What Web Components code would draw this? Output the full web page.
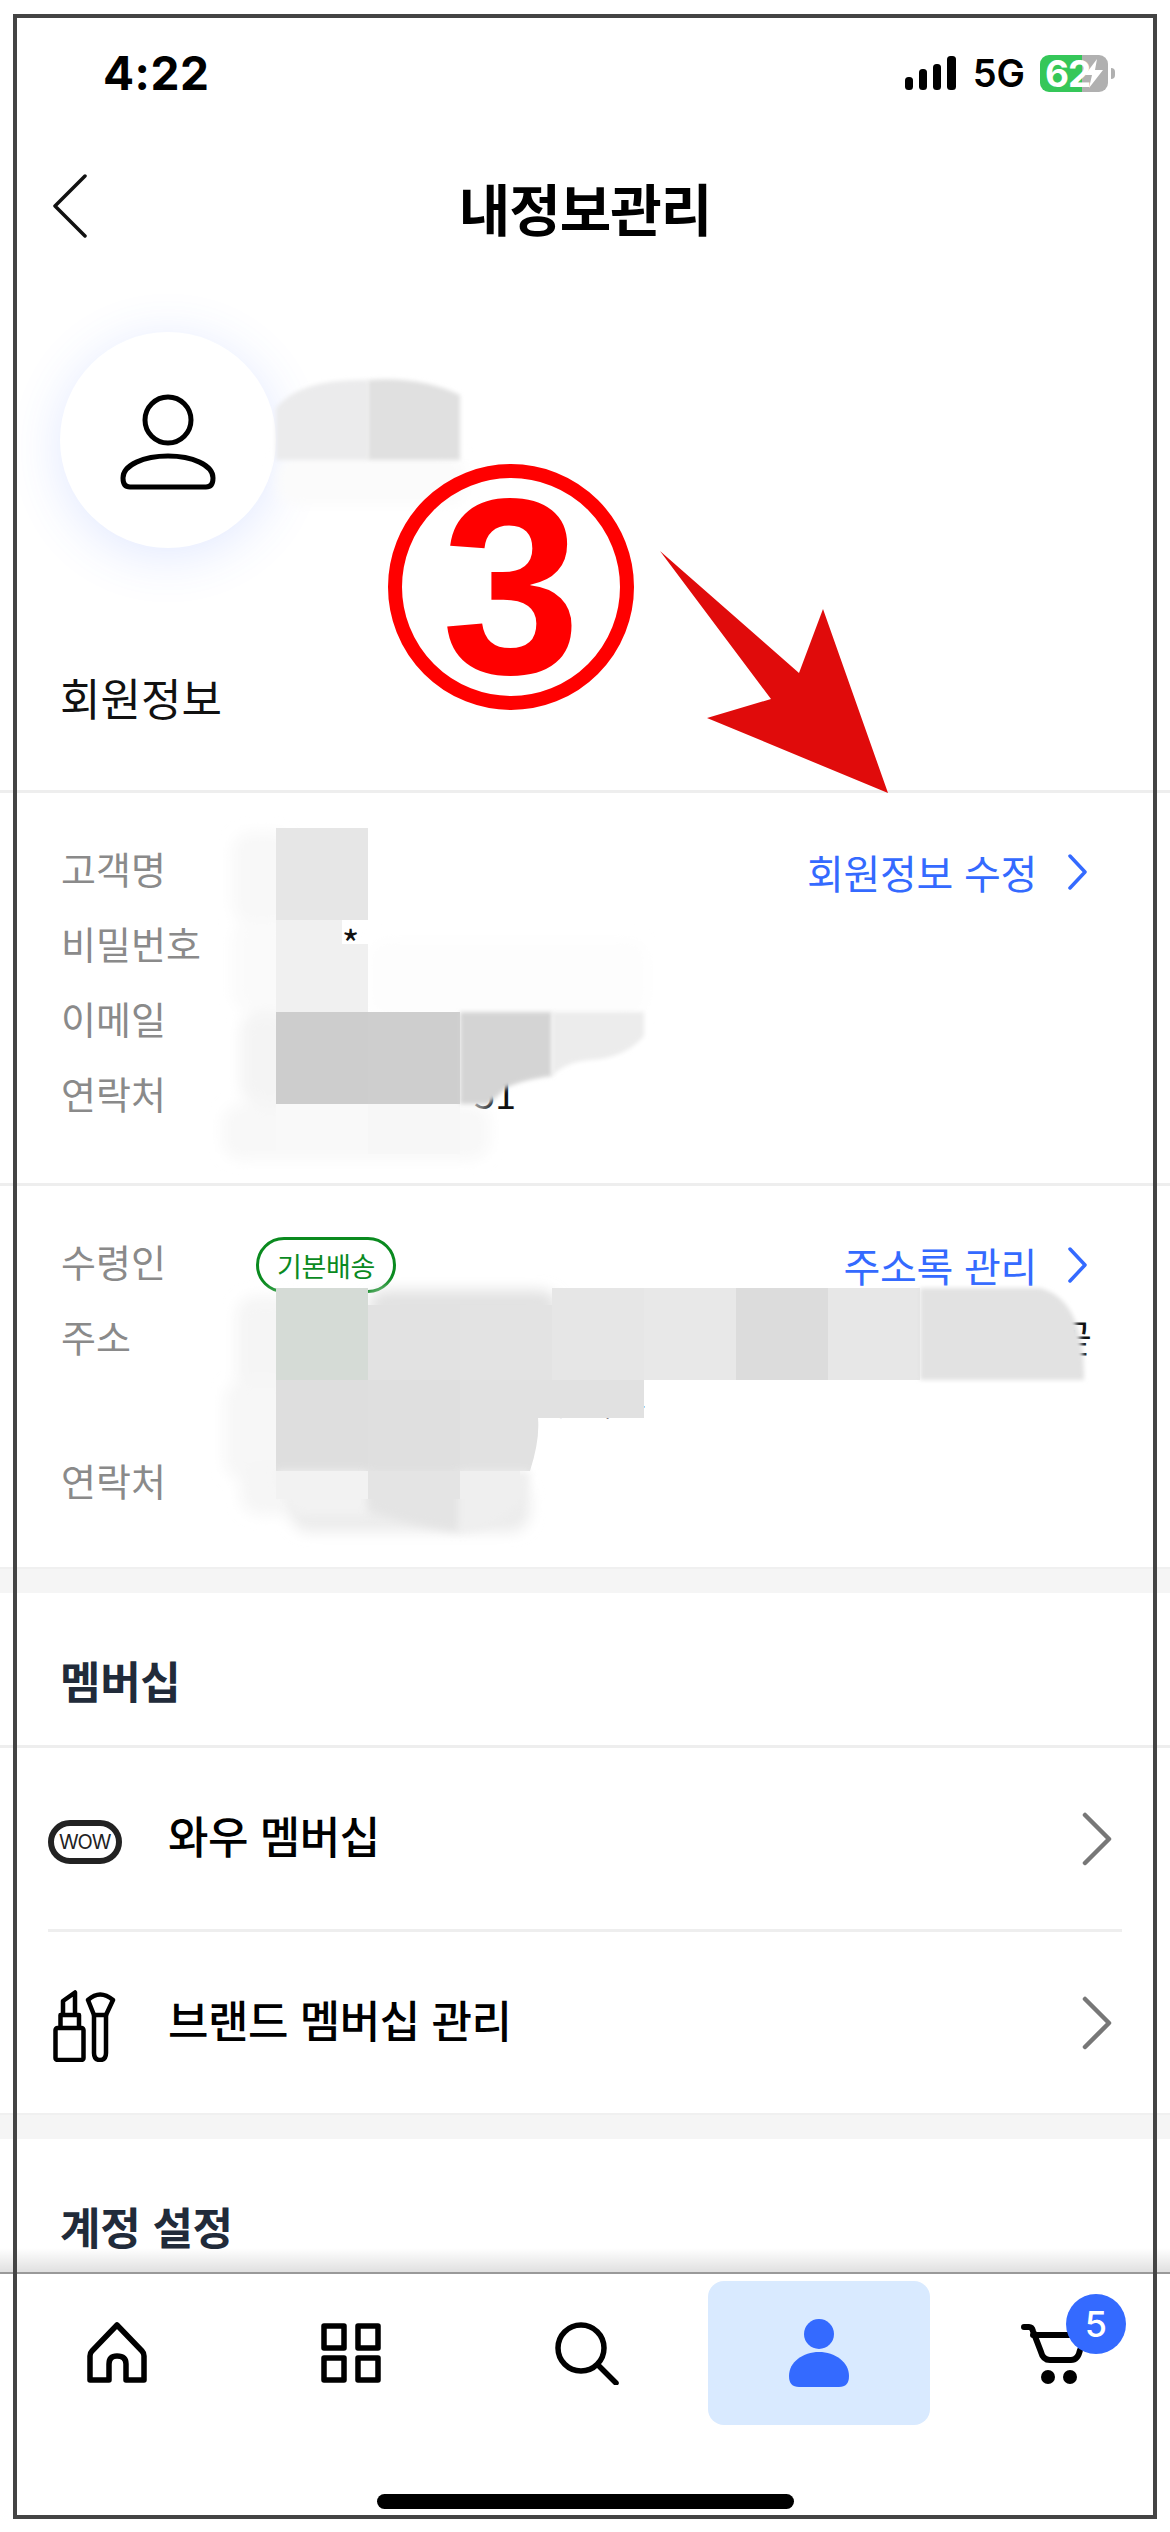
<!DOCTYPE html>
<html lang="ko">
<head>
<meta charset="utf-8">
<title>내정보관리</title>
<style>
  html, body { margin: 0; padding: 0; background: #fff; }
  body { font-family: "Noto Sans CJK KR", "Noto Sans", sans-serif; }
</style>
</head>
<body>
<app-page>
  <status-bar></status-bar>
  <nav-header>내정보관리</nav-header>
  <profile-head>회원정보</profile-head>

  <info-section>
    <info-row label="고객명"></info-row>
    <info-row label="비밀번호"><span style="padding-left:68px">**</span></info-row>
    <info-row label="이메일"></info-row>
    <info-row label="연락처"><span style="padding-left:218px">51</span></info-row>
    <link-action slot="action">회원정보 수정</link-action>
  </info-section>

  <info-section class="address">
    <info-row label="수령인"><default-pill>기본배송</default-pill></info-row>
    <info-row label="주소" tall>
      <div style="text-align:right;width:836px">곧</div>
      <div style="line-height:51px;padding-left:261px;white-space:pre;letter-spacing:-9px;word-spacing:15px;font-weight:300">ㅣㅣ ㅐㅗ</div>
    </info-row>
    <info-row label="연락처"></info-row>
    <link-action slot="action">주소록 관리</link-action>
  </info-section>

  <gap-band></gap-band>
  <section-title>멤버십</section-title>
  <menu-row>
    <svg slot="icon" width="74" height="44" viewBox="0 0 74 44">
      <rect x="3" y="3" width="68" height="38" rx="19" fill="none" stroke="#222" stroke-width="6"/>
      <text x="37" y="29" text-anchor="middle" font-family="Inter, sans-serif" font-size="20" font-weight="400" fill="#222" textLength="52">WOW</text>
    </svg>
    와우 멤버십
  </menu-row>
  <hr-inset></hr-inset>
  <menu-row>
    <svg slot="icon" style="margin-left:5px" width="64" height="72" viewBox="0 0 64 72" fill="none" stroke="#000" stroke-width="4.500" stroke-linejoin="round">
      <rect x="2.500" y="38" width="28" height="32" rx="2"/>
      <path d="M7.500 38V25H26V38"/>
      <path d="M10 25V11L22 2.500V25"/>
      <path d="M41 25H53V63Q53 70 47 70Q41 70 41 63Z"/>
      <path d="M41 25L35 10Q47 -1 60 10L53 25"/>
    </svg>
    브랜드 멤버십 관리
  </menu-row>
  <gap-band></gap-band>
  <section-title>계정 설정</section-title>

  <tab-bar slot="footer">
    <tab-item>
      <svg width="60" height="62" viewBox="0 0 60 62" fill="none" stroke="#000" stroke-width="5.500" stroke-linejoin="round">
        <path d="M30 3L55 29Q57 31 57 34V58H39V42Q39 34 30 34Q22 34 22 42V58H3V34Q3 31 5 29Z"/>
      </svg>
    </tab-item>
    <tab-item>
      <svg width="60" height="60" viewBox="0 0 60 60" fill="none" stroke="#000" stroke-width="5.500" stroke-linejoin="round">
        <rect x="3" y="3" width="20" height="22"/><rect x="37" y="3" width="20" height="22"/>
        <rect x="3" y="35" width="20" height="22"/><rect x="37" y="35" width="20" height="22"/>
      </svg>
    </tab-item>
    <tab-item>
      <svg style="margin-left:4px" width="64" height="64" viewBox="0 0 64 64" fill="none" stroke="#000" stroke-width="5.500" stroke-linecap="round">
        <circle cx="26" cy="27" r="23"/><path d="M43 44L61 62"/>
      </svg>
    </tab-item>
    <tab-item active>
      <svg width="60" height="68" viewBox="0 0 60 68" fill="#346aff">
        <circle cx="30" cy="15" r="15"/>
        <path d="M0 57C0 43 14 33 30 33S60 43 60 57Q60 68 50 68H10Q0 68 0 57Z"/>
      </svg>
    </tab-item>
    <tab-item badge="5">
      <svg width="64" height="64" viewBox="0 0 64 64" fill="none" stroke="#000" stroke-width="6" stroke-linecap="round">
        <path d="M3 6H8Q11 6 12 10L20 31Q22 39 29 39H50Q57 39 59 29"/>
        <path d="M12 14H50"/>
        <circle cx="27" cy="56" r="7" fill="#000" stroke="none"/>
        <circle cx="49" cy="56" r="7" fill="#000" stroke="none"/>
      </svg>
    </tab-item>
  </tab-bar>

  <pixel-mask slot="over"></pixel-mask>
  <step-mark slot="over">3</step-mark>
  <device-frame slot="over"></device-frame>
</app-page>

<script>
class AppPage extends HTMLElement {
  connectedCallback() {
    this.attachShadow({ mode: 'open' });
    this.shadowRoot.innerHTML = `
      <style>
        :host {
          display: flex;
          flex-direction: column;
          position: relative;
          width: 1170px;
          height: 2532px;
          overflow: hidden;
          background: #fff;
          color: #111;
        }
        .scroll { flex: 1; min-height: 0; overflow: hidden; }
      </style>
      <div class="scroll"><slot></slot></div>
      <slot name="footer"></slot>
      <slot name="over"></slot>
    `;
  }
}

class StatusBar extends HTMLElement {
  connectedCallback() {
    this.attachShadow({ mode: 'open' });
    this.shadowRoot.innerHTML = `
      <style>
        :host {
          display: flex;
          justify-content: space-between;
          align-items: center;
          box-sizing: border-box;
          height: 146px;
          padding: 0 55px 0 103px;
          font-family: Inter, "Liberation Sans", sans-serif;
          color: #000;
        }
        .time { font-size: 46px; font-weight: 700; letter-spacing: 0.5px; }
        .right { display: flex; align-items: center; }
        .net { font-size: 38px; font-weight: 600; margin: 0 15px 0 17px; }
        .batt {
          position: relative;
          width: 68px;
          height: 37px;
          border-radius: 9px;
          background: linear-gradient(90deg, #35c759 0 62%, #b0b0b0 62%);
          color: #fff;
          font-size: 37px;
          font-weight: 700;
          line-height: 37px;
          padding-left: 5px;
          box-sizing: border-box;
          letter-spacing: -1px;
        }
        .batt svg { position: absolute; left: 44px; top: 4px; }
        .nub { width: 4px; height: 11px; margin-left: 3px; background: #b0b0b0; border-radius: 0 4px 4px 0; }
      </style>
      <span class="time">4:22</span>
      <span class="right">
        <svg width="51" height="34" viewBox="0 0 51 34" fill="#000">
          <rect x="0" y="21" width="8" height="13" rx="3.500"/>
          <rect x="14" y="13" width="8" height="21" rx="3.500"/>
          <rect x="28" y="8" width="8" height="26" rx="3.500"/>
          <rect x="42" y="0" width="9" height="34" rx="3.500"/>
        </svg>
        <span class="net">5G</span>
        <span class="batt">62<svg width="20" height="29" viewBox="0 0 20 29" fill="#fff"><path d="M13 0L1 16H8L5 29L19 11H11Z"/></svg></span>
        <span class="nub"></span>
      </span>
    `;
  }
}

class NavHeader extends HTMLElement {
  connectedCallback() {
    this.attachShadow({ mode: 'open' });
    this.shadowRoot.innerHTML = `
      <style>
        :host {
          display: grid;
          grid-template-columns: 1fr auto 1fr;
          align-items: center;
          box-sizing: border-box;
          height: 120px;
        }
        svg { margin-left: 52px; }
        .title { font-size: 56px; font-weight: 700; color: #000; letter-spacing: -1px; }
      </style>
      <svg width="36" height="64" viewBox="0 0 36 64" fill="none" stroke="#111" stroke-width="3.500" stroke-linecap="round" stroke-linejoin="round">
        <path d="M33 2L3 32L33 62"/>
      </svg>
      <span class="title"><slot></slot></span>
      <span></span>
    `;
  }
}

class ProfileHead extends HTMLElement {
  connectedCallback() {
    this.attachShadow({ mode: 'open' });
    this.shadowRoot.innerHTML = `
      <style>
        :host {
          display: block;
          box-sizing: border-box;
          height: 524px;
          padding: 66px 0 0 60px;
        }
        .avatar {
          display: flex;
          align-items: center;
          justify-content: center;
          width: 216px;
          height: 216px;
          border-radius: 50%;
          background: #fff;
          box-shadow: 0 8px 52px rgba(70, 110, 255, 0.16);
        }
        .avatar svg { margin-top: 3px; }
        .label { margin-top: 119px; font-size: 44px; line-height: 60px; color: #111; }
      </style>
      <div class="avatar">
        <svg width="96" height="96" viewBox="0 0 96 96" fill="none" stroke="#000" stroke-width="5">
          <ellipse cx="48" cy="26" rx="23" ry="23"/>
          <path d="M3 84C3 71 24 62 48 62S93 71 93 84Q93 93 86 93H10Q3 93 3 84Z"/>
        </svg>
      </div>
      <div class="label"><slot></slot></div>
    `;
  }
}

class InfoSection extends HTMLElement {
  connectedCallback() {
    this.attachShadow({ mode: 'open' });
    this.shadowRoot.innerHTML = `
      <style>
        :host {
          display: flex;
          justify-content: space-between;
          box-sizing: border-box;
          border-top: 3px solid #eeeeee;
          height: 393px;
          padding: 37px 0 0 61px;
        }
        :host(.address) { height: 384px; }
        .rows { flex: 1; min-width: 0; position: relative; }
        .action { position: absolute; right: 84px; }
      </style>
      <div class="rows"><slot></slot></div>
      <div class="action"><slot name="action"></slot></div>
    `;
  }
}

class InfoRow extends HTMLElement {
  connectedCallback() {
    this.attachShadow({ mode: 'open' });
    this.shadowRoot.innerHTML = `
      <style>
        :host {
          display: grid;
          grid-template-columns: 195px 1fr;
          height: 75px;
          line-height: 75px;
          font-size: 38px;
          color: #111;
        }
        :host([tall]) { height: 144px; }
        .label { color: #8a8a8a; }
      </style>
      <span class="label">${this.getAttribute('label')}</span>
      <div class="value"><slot></slot></div>
    `;
  }
}

class DefaultPill extends HTMLElement {
  connectedCallback() {
    this.attachShadow({ mode: 'open' });
    this.shadowRoot.innerHTML = `
      <style>
        :host {
          display: inline-flex;
          align-items: center;
          justify-content: center;
          box-sizing: border-box;
          width: 140px;
          height: 56px;
          border: 3px solid #0a8a1f;
          border-radius: 28px;
          color: #0a8a1f;
          font-size: 27px;
          line-height: 1;
          letter-spacing: -0.3px;
          vertical-align: top;
          margin-top: 14px;
        }
      </style>
      <slot></slot>
    `;
  }
}

class LinkAction extends HTMLElement {
  connectedCallback() {
    this.attachShadow({ mode: 'open' });
    this.shadowRoot.innerHTML = `
      <style>
        :host {
          display: flex;
          align-items: center;
          gap: 31px;
          height: 75px;
          margin-top: 4px;
          font-size: 40px;
          color: #346aff;
          letter-spacing: -0.3px;
        }
        svg { margin-right: -1px; }
      </style>
      <slot></slot>
      <svg width="19" height="36" viewBox="0 0 19 36" fill="none" stroke="#346aff" stroke-width="3.500" stroke-linecap="round" stroke-linejoin="round">
        <path d="M2 2L17 18L2 34"/>
      </svg>
    `;
  }
}

class GapBand extends HTMLElement {
  connectedCallback() {
    this.attachShadow({ mode: 'open' });
    this.shadowRoot.innerHTML = `
      <style>
        :host { display: block; height: 26px; background: #f5f5f5; border-top: 2px solid #f0f0f0; box-sizing: border-box; }
      </style>
    `;
  }
}

class SectionTitle extends HTMLElement {
  connectedCallback() {
    this.attachShadow({ mode: 'open' });
    this.shadowRoot.innerHTML = `
      <style>
        :host {
          display: block;
          box-sizing: border-box;
          height: 155px;
          padding: 53px 0 0 60px;
          border-bottom: 3px solid #eeeeee;
          font-size: 44px;
          line-height: 68px;
          font-weight: 700;
          color: #212b3a;
          letter-spacing: -0.3px;
        }
      </style>
      <slot></slot>
    `;
  }
}

class MenuRow extends HTMLElement {
  connectedCallback() {
    this.attachShadow({ mode: 'open' });
    this.shadowRoot.innerHTML = `
      <style>
        :host {
          display: grid;
          grid-template-columns: 120px 1fr 28px;
          align-items: center;
          box-sizing: border-box;
          height: 181px;
          padding: 0 60px 0 48px;
          font-size: 44px;
          font-weight: 500;
          color: #000;
          letter-spacing: -0.5px;
        }
        .icon { display: flex; padding-top: 6px; }
        .name { padding-bottom: 8px; }
      </style>
      <div class="icon"><slot name="icon"></slot></div>
      <div class="name"><slot></slot></div>
      <svg width="30" height="54" viewBox="0 0 30 54" fill="none" stroke="#777" stroke-width="4.500" stroke-linecap="round" stroke-linejoin="round">
        <path d="M3 3L27 27L3 51"/>
      </svg>
    `;
  }
}

class HrInset extends HTMLElement {
  connectedCallback() {
    this.attachShadow({ mode: 'open' });
    this.shadowRoot.innerHTML = `
      <style>
        :host { display: block; height: 3px; margin: 0 48px; background: #eeeeee; }
      </style>
    `;
  }
}

class TabBar extends HTMLElement {
  connectedCallback() {
    this.attachShadow({ mode: 'open' });
    this.shadowRoot.innerHTML = `
      <style>
        :host {
          display: block;
          position: relative;
          box-sizing: border-box;
          height: 260px;
          padding-top: 7px;
          border-top: 2px solid #999999;
          background: #fff;
        }
        :host::before {
          content: "";
          position: absolute;
          left: 0;
          right: 0;
          top: -26px;
          height: 24px;
          background: linear-gradient(rgba(0,0,0,0), rgba(0,0,0,0.12));
        }
        .tabs { display: grid; grid-template-columns: repeat(5, 1fr); height: 144px; }
        .home {
          width: 417px;
          height: 15px;
          margin: 69px auto 0;
          border-radius: 8px;
          background: #000;
        }
      </style>
      <div class="tabs"><slot></slot></div>
      <div class="home"></div>
    `;
  }
}

class TabItem extends HTMLElement {
  connectedCallback() {
    this.attachShadow({ mode: 'open' });
    const badge = this.getAttribute('badge');
    this.shadowRoot.innerHTML = `
      <style>
        :host {
          display: flex;
          align-items: center;
          justify-content: center;
          margin: 0 6px;
          border-radius: 16px;
        }
        :host([active]) { background: #d9eaff; }
        .wrap { display: flex; position: relative; }
        .badge {
          position: absolute;
          left: 45px;
          top: -27px;
          width: 60px;
          height: 60px;
          border-radius: 50%;
          background: #346aff;
          color: #fff;
          font: 500 36px/60px Inter, "Liberation Sans", sans-serif;
          text-align: center;
        }
      </style>
      <div class="wrap"><slot></slot>${badge ? `<span class="badge">${badge}</span>` : ''}</div>
    `;
  }
}

// the blurred out personal data, a 92px mosaic that lies over the values
class PixelMask extends HTMLElement {
  connectedCallback() {
    this.attachShadow({ mode: 'open' });
    const soft = [
      [232, 832, 60, 92, '#f8f8f8'], [232, 920, 60, 92, '#fafafa'], [240, 1012, 60, 92, '#f4f4f4'],
      [222, 1104, 268, 56, '#f8f8f8'], [368, 940, 280, 76, '#fdfdfd'], [276, 455, 190, 50, '#fbfbfb'],
      [236, 1296, 60, 96, '#f5f5f5'], [224, 1380, 70, 100, '#f7f7f7'], [240, 1465, 120, 50, '#f6f6f6'],
      [368, 1290, 190, 30, '#e2e2e2'], [290, 1480, 240, 52, '#ececec']
    ];
    const cells = [
      [276, 828, 92, 92, '#e6e6e6'], [276, 920, 66, 24, '#f0f0f0'], [276, 944, 92, 68, '#f0f0f0'],
      [276, 1012, 92, 92, '#cdcdcd'], [368, 1012, 92, 92, '#cecece'],
      [276, 1104, 92, 50, '#f9f9f9'], [368, 1104, 92, 50, '#f7f7f7'],
      [276, 1288, 92, 92, '#d5dbd6'], [368, 1305, 92, 75, '#e2e2e2'], [460, 1305, 92, 75, '#e3e3e3'],
      [552, 1288, 92, 92, '#e6e6e6'], [644, 1288, 92, 92, '#e8e8e8'], [736, 1288, 92, 92, '#dcdcdc'],
      [828, 1288, 92, 92, '#e7e7e7'],
      [276, 1380, 92, 91, '#dedede'], [368, 1380, 92, 91, '#dfdfdf']
    ];
    const rects = (list, rx) => list.map(([x, y, w, h, c]) => `<rect x="${x}" y="${y}" width="${w}" height="${h}" rx="${rx}" fill="${c}"/>`).join('');
    this.shadowRoot.innerHTML = `
      <style>
        :host { position: absolute; left: 0; top: 0; width: 1170px; height: 2532px; pointer-events: none; }
        svg { display: block; }
      </style>
      <svg width="1170" height="2532" viewBox="0 0 1170 2532">
        <defs>
          <filter id="b6" x="-30%" y="-30%" width="160%" height="160%"><feGaussianBlur stdDeviation="7"/></filter>
          <filter id="b2" x="-10%" y="-10%" width="120%" height="120%"><feGaussianBlur stdDeviation="2"/></filter>
          <filter id="b4" x="-20%" y="-20%" width="140%" height="140%"><feGaussianBlur stdDeviation="4"/></filter>
        </defs>
        <g filter="url(#b6)">${rects(soft, 20)}</g>
        <path filter="url(#b2)" fill="#ebebec" d="M276 460V408Q300 378 368 380V460Z"/>
        <path filter="url(#b2)" fill="#e0e0e0" d="M368 460V380Q420 376 460 395V460Z"/>
        ${rects(cells, 0)}
        <path fill="#f0f0f0" d="M368 1012H342V944H368Z"/>
        <path filter="url(#b2)" fill="#d4d4d4" d="M460 1012H552V1076Q522 1080 506 1088Q496 1098 488 1104H460Z"/>
        <path filter="url(#b2)" fill="#ececec" d="M552 1012H644V1036Q625 1058 590 1060Q565 1062 552 1076Z"/>
        <path filter="url(#b2)" fill="#e2e2e2" d="M920 1288H1040Q1085 1300 1084 1380H920Z"/>
        <path fill="#e1e1e1" d="M460 1380H644V1418H538Q540 1440 530 1471H460Z"/>
        <path filter="url(#b4)" fill="#f2f2f2" d="M276 1471H368V1516H300Q280 1500 276 1471Z"/>
        <path filter="url(#b4)" fill="#e4e4e4" d="M368 1471H460V1532Q420 1528 368 1510Z"/>
        <path filter="url(#b4)" fill="#efefef" d="M460 1471H530Q532 1520 460 1532Z"/>
        <rect x="368" y="1471" width="92" height="28" fill="#e4e4e4"/>
        <rect x="460" y="1471" width="60" height="28" fill="#efefef"/>
        <rect x="276" y="1471" width="92" height="28" fill="#f2f2f2"/>
      </svg>
    `;
  }
}

class StepMark extends HTMLElement {
  connectedCallback() {
    this.attachShadow({ mode: 'open' });
    this.shadowRoot.innerHTML = `
      <style>
        :host { position: absolute; left: 0; top: 0; width: 1170px; height: 2532px; pointer-events: none; }
        .ring {
          position: absolute;
          left: 388px;
          top: 464px;
          box-sizing: border-box;
          width: 246px;
          height: 246px;
          border: 14px solid #ff0000;
          border-radius: 50%;
          display: flex;
          align-items: center;
          justify-content: center;
          color: #ff0000;
          font: 700 250px/1 "Liberation Sans", sans-serif;
        }
        svg { position: absolute; left: 0; top: 0; }
      </style>
      <div class="ring"><slot></slot></div>
      <svg width="1170" height="820" viewBox="0 0 1170 820">
        <path fill="#e00b0b" d="M660 551L799 673L823 609L888 793L707 718L771 699Z"/>
      </svg>
    `;
  }
}

class DeviceFrame extends HTMLElement {
  connectedCallback() {
    this.attachShadow({ mode: 'open' });
    this.shadowRoot.innerHTML = `
      <style>
        :host {
          position: absolute;
          left: 13px;
          top: 14px;
          box-sizing: border-box;
          width: 1144px;
          height: 2505px;
          border: 4px solid #444;
          pointer-events: none;
        }
      </style>
    `;
  }
}

customElements.define('app-page', AppPage);
customElements.define('status-bar', StatusBar);
customElements.define('nav-header', NavHeader);
customElements.define('profile-head', ProfileHead);
customElements.define('info-section', InfoSection);
customElements.define('info-row', InfoRow);
customElements.define('default-pill', DefaultPill);
customElements.define('link-action', LinkAction);
customElements.define('gap-band', GapBand);
customElements.define('section-title', SectionTitle);
customElements.define('menu-row', MenuRow);
customElements.define('hr-inset', HrInset);
customElements.define('tab-bar', TabBar);
customElements.define('tab-item', TabItem);
customElements.define('pixel-mask', PixelMask);
customElements.define('step-mark', StepMark);
customElements.define('device-frame', DeviceFrame);
</script>
</body>
</html>
